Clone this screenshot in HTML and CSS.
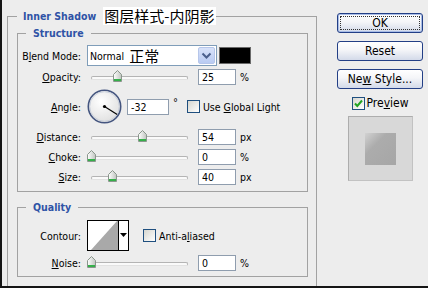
FILE: index.html
```html
<!DOCTYPE html>
<html>
<head>
<meta charset="utf-8">
<link rel="stylesheet" href="styles.css">
</head>
<body>
<svg class="defs" width="0" height="0">
  <defs>
    <linearGradient id="thumbg" x1="0" y1="0" x2="1" y2="0">
      <stop offset="0" stop-color="#ffffff"/>
      <stop offset="1" stop-color="#bfc4bf"/>
    </linearGradient>
    <radialGradient id="dialg" cx="40%" cy="35%" r="70%">
      <stop offset="0" stop-color="#ffffff"/>
      <stop offset="1" stop-color="#dedede"/>
    </radialGradient>
  </defs>
</svg>
<div class="dialog">
  <div class="left">
    <div class="outer">
      <div class="gtitle"><span class="gt-text gt-outer">Inner Shadow</span><span class="cn">图层样式-内阴影</span></div>

      <div class="group structure">
        <div class="gtitle"><span class="gt-text gt-inner">Structure</span></div>

        <div class="row blend-row">
          <span class="lbl">B<u>l</u>end Mode:</span>
          <div class="select">
            <span class="sel-text"><span class="sel-en">Normal</span><span class="sel-cn">正常</span></span>
            <span class="sel-btn"><svg width="11" height="8" viewBox="0 0 11 8"><path d="M1.5 1.5 L5.5 5.5 L9.5 1.5" fill="none" stroke="#4a5f8c" stroke-width="2"/></svg></span>
          </div>
          <div class="swatch"></div>
        </div>

        <div class="row slider-row">
          <span class="lbl"><u>O</u>pacity:</span>
          <div class="slider"><div class="track"></div><svg class="thumb" style="left:26px" width="9" height="12" viewBox="0 0 9 12"><path d="M0.5 4.5 L4.5 0.5 L8.5 4.5 V11.5 H0.5 Z" fill="url(#thumbg)" stroke="#8a968c"/><rect x="1" y="9" width="7" height="2" fill="#35b04a"/></svg></div>
          <div class="input">25</div><span class="unit">%</span>
        </div>

        <div class="row angle-row">
          <span class="lbl"><u>A</u>ngle:</span>
          <svg class="dial" width="35" height="35" viewBox="0 0 35 35">
            <circle cx="17.5" cy="17.5" r="16.2" fill="url(#dialg)" stroke="#44557f" stroke-width="1.6"/>
            <circle cx="17.5" cy="17.5" r="14.8" fill="none" stroke="#c3cad8" stroke-width="0.8"/>
            <line x1="17.5" y1="17.5" x2="30.2" y2="25.4" stroke="#000" stroke-width="1.2"/>
            <circle cx="17.5" cy="17.5" r="1.6" fill="#000"/>
          </svg>
          <div class="input angle-input">-32</div><span class="deg">°</span>
          <span class="cb"></span><span class="cb-label">Use <u>G</u>lobal Light</span>
        </div>

        <div class="row slider-row dist-row">
          <span class="lbl"><u>D</u>istance:</span>
          <div class="slider"><div class="track"></div><svg class="thumb" style="left:51px" width="9" height="12" viewBox="0 0 9 12"><path d="M0.5 4.5 L4.5 0.5 L8.5 4.5 V11.5 H0.5 Z" fill="url(#thumbg)" stroke="#8a968c"/><rect x="1" y="9" width="7" height="2" fill="#35b04a"/></svg></div>
          <div class="input">54</div><span class="unit">px</span>
        </div>

        <div class="row slider-row">
          <span class="lbl"><u>C</u>hoke:</span>
          <div class="slider"><div class="track"></div><svg class="thumb" style="left:0px" width="9" height="12" viewBox="0 0 9 12"><path d="M0.5 4.5 L4.5 0.5 L8.5 4.5 V11.5 H0.5 Z" fill="url(#thumbg)" stroke="#8a968c"/><rect x="1" y="9" width="7" height="2" fill="#35b04a"/></svg></div>
          <div class="input">0</div><span class="unit">%</span>
        </div>

        <div class="row slider-row">
          <span class="lbl"><u>S</u>ize:</span>
          <div class="slider"><div class="track"></div><svg class="thumb" style="left:21px" width="9" height="12" viewBox="0 0 9 12"><path d="M0.5 4.5 L4.5 0.5 L8.5 4.5 V11.5 H0.5 Z" fill="url(#thumbg)" stroke="#8a968c"/><rect x="1" y="9" width="7" height="2" fill="#35b04a"/></svg></div>
          <div class="input">40</div><span class="unit">px</span>
        </div>
      </div>

      <div class="group quality">
        <div class="gtitle"><span class="gt-text gt-inner">Quality</span></div>

        <div class="row contour-row">
          <span class="lbl">Contour:</span>
          <div class="contour">
            <svg class="contour-swatch" width="30" height="29" viewBox="0 0 30 29"><rect width="30" height="29" fill="#fff"/><polygon points="3,29 29,0 30,0 30,29" fill="#a9a9a9"/></svg>
            <span class="contour-btn"><svg width="7" height="4" viewBox="0 0 7 4"><polygon points="0,0 7,0 3.5,4" fill="#000"/></svg></span>
          </div>
          <span class="cb cb-aa"></span><span class="cb-label">Anti-a<u>l</u>iased</span>
        </div>

        <div class="row slider-row noise-row">
          <span class="lbl"><u>N</u>oise:</span>
          <div class="slider"><div class="track"></div><svg class="thumb" style="left:0px" width="9" height="12" viewBox="0 0 9 12"><path d="M0.5 4.5 L4.5 0.5 L8.5 4.5 V11.5 H0.5 Z" fill="url(#thumbg)" stroke="#8a968c"/><rect x="1" y="9" width="7" height="2" fill="#35b04a"/></svg></div>
          <div class="input">0</div><span class="unit">%</span>
        </div>
      </div>
    </div>
  </div>

  <div class="right">
    <div class="btn btn-default"><span class="focus">OK</span></div>
    <div class="btn"><span>Reset</span></div>
    <div class="btn"><span>Ne<u>w</u> Style...</span></div>
    <div class="preview-row">
      <span class="cb cb-checked"><svg width="11" height="11" viewBox="0 0 11 11"><path d="M2 5.5 L4.3 8 L9 2.5" fill="none" stroke="#22a322" stroke-width="2"/></svg></span>
      <span class="preview-label">Pre<u>v</u>iew</span>
    </div>
    <div class="preview-box"><div class="preview-square"></div></div>
  </div>
</div>
</body>
</html>
```

FILE: styles.css
```css
* { box-sizing: border-box; }

body {
  margin: 0;
  background: #ededed;
  font-family: "DejaVu Sans Condensed", "DejaVu Sans", sans-serif;
  font-stretch: condensed;
  font-size: 10.5px;
  color: #000;
}

.defs { display: block; width: 0; height: 0; }

.dialog {
  width: 428px;
  height: 288px;
  display: flex;
  border-left: 2px solid #151515;
  border-bottom: 2px solid #151515;
  background: #ededed;
}

.left {
  padding: 16px 0 0 5px;
  display: flex;
  flex-direction: column;
}

.outer {
  width: 310px;
  flex: 1;
  border: 1px solid #a2a2a2;
  border-bottom: none;
}

.gtitle {
  display: flex;
  align-items: center;
  height: 14px;
  margin-top: -8px;
}

.gt-text {
  font-weight: bold;
  color: #2f53a6;
  background: #ededed;
  line-height: 14px;
}

.gt-outer { margin-left: 9px; padding: 0 7px 0 6px; }
.gt-inner { margin-left: 8px; padding: 0 7px 0 7px; }

.cn {
  font-family: "Noto Sans CJK SC", sans-serif;
  font-size: 15px;
  line-height: 18px;
  height: 18px;
  background: #ffffff;
  padding: 0 2px 0 1px;
  color: #000;
}

.group {
  border: 1px solid #a2a2a2;
  margin: 0 8px 0 9px;
}

.structure { margin-top: 10px; padding-bottom: 6px; }
.quality { margin-top: 15px; padding-bottom: 5px; }

.row {
  display: flex;
  align-items: center;
  height: 16px;
}

.lbl {
  width: 63px;
  flex: none;
  text-align: right;
  margin-right: 6px;
  white-space: nowrap;
}

.blend-row { margin-top: 5px; height: 21px; }
.structure .slider-row { margin-top: 4px; }
.structure .blend-row + .slider-row { margin-top: 3px; }
.angle-row { margin-top: 4px; height: 35px; }
.structure .dist-row { margin-top: 5px; }

.select {
  width: 130px;
  height: 21px;
  border: 1px solid #7f9db9;
  background: #fff;
  display: flex;
  align-items: center;
}

.sel-text {
  flex: 1;
  padding-left: 2px;
  display: flex;
  align-items: center;
  white-space: nowrap;
}

.sel-en { font-size: 10.5px; margin-right: 5px; }
.sel-cn { font-family: "Noto Sans CJK SC", sans-serif; font-size: 15px; line-height: 18px; }

.sel-btn {
  width: 17px;
  height: 17px;
  margin-right: 1px;
  border: 1px solid #b6c6ea;
  border-radius: 2px;
  background: linear-gradient(#d8e2fa, #b9cbf2);
  display: flex;
  align-items: center;
  justify-content: center;
}

.swatch {
  width: 32px;
  height: 17px;
  margin-left: 2px;
  background: #000;
  border: 1px solid #6a6a6a;
}

.slider {
  position: relative;
  width: 105px;
  height: 16px;
  display: flex;
  align-items: center;
  margin-right: 6px;
}

.track {
  flex: 1;
  margin: 1px 4px 0 4px;
  height: 4px;
  border-radius: 2px;
  border: 1px solid #b4b4b4;
  border-bottom-color: #e2e2e2;
  background: #fafafa;
}

.thumb {
  position: absolute;
  top: 1px;
}

.input {
  width: 38px;
  height: 16px;
  border: 1px solid #8f9dae;
  background: #fff;
  padding-left: 3px;
  line-height: 14px;
}

.unit { margin-left: 4px; }

.dial { flex: none; }

.angle-input { width: 42px; margin-left: 5px; }

.deg { align-self: flex-start; margin: 8px 0 0 4px; font-size: 11px; line-height: 12px; }

.cb {
  width: 13px;
  height: 13px;
  flex: none;
  border: 1px solid #1f4f7f;
  background: linear-gradient(135deg, #d6d6cf, #ffffff);
  display: flex;
  align-items: center;
  justify-content: center;
}

.angle-row .cb { margin-left: 9px; }
.cb-label { margin-left: 3px; white-space: nowrap; }

.contour-row { margin-top: 6px; height: 31px; }

.contour {
  width: 42px;
  height: 31px;
  border: 1px solid #000;
  display: flex;
  background: #fff;
}

.contour-swatch { display: block; }

.contour-btn {
  flex: 1;
  display: flex;
  align-items: flex-start;
  justify-content: center;
  padding-top: 12px;
  border-left: 1px solid #000;
}

.cb-aa { margin-left: 14px; }

.noise-row { margin-top: 4px; }

.right {
  margin-left: 20px;
  width: 86px;
  padding-top: 13px;
  display: flex;
  flex-direction: column;
  align-items: center;
}

.btn {
  width: 86px;
  height: 20px;
  flex: none;
  border: 1px solid #233f86;
  border-radius: 3px;
  background: linear-gradient(#ffffff 0%, #f4f5f8 45%, #d3dae9 100%);
  font-size: 12px;
  display: flex;
  align-items: center;
  justify-content: center;
  margin-bottom: 8px;
  white-space: nowrap;
}

.btn-default {
  padding: 2px;
  box-shadow: inset 0 0 0 1px #a9bde6;
}

.focus {
  flex: 1;
  align-self: stretch;
  border: 1px dotted #333;
  display: flex;
  align-items: center;
  justify-content: center;
}

.preview-row {
  display: flex;
  align-items: center;
  margin-top: -1px;
  font-size: 12px;
}

.preview-label { margin-left: 2px; }

.preview-box {
  margin-top: 6px;
  width: 65px;
  height: 65px;
  background: #d8d8d8;
  border: 1px solid #c2c2c2;
  border-top-color: #adadad;
  border-left-color: #adadad;
  display: flex;
  align-items: center;
  justify-content: center;
}

.preview-square {
  width: 31px;
  height: 32px;
  background: linear-gradient(135deg, #d2d2d2 0%, #acacac 35%, #a6a6a6 100%);
}
```
